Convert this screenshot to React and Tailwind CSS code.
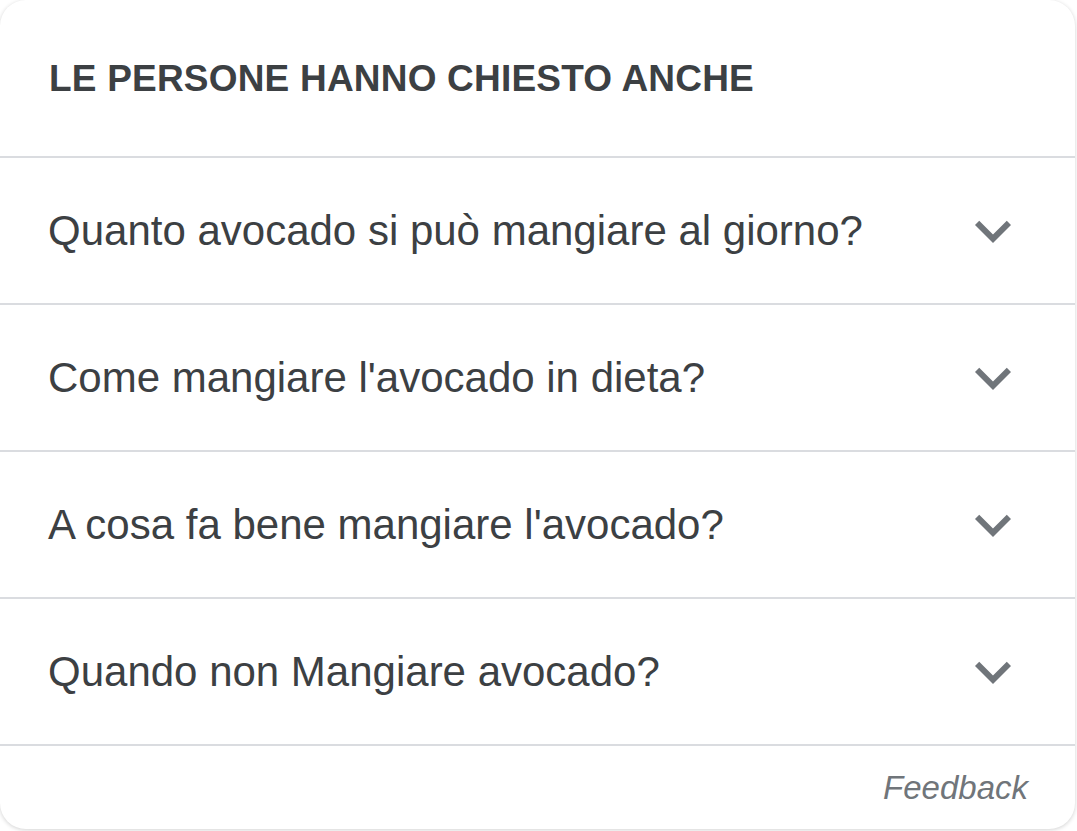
export default function App() {
  const questions = [
    "Quanto avocado si può mangiare al giorno?",
    "Come mangiare l'avocado in dieta?",
    "A cosa fa bene mangiare l'avocado?",
    "Quando non Mangiare avocado?",
  ];

  return (
    <div className="w-[1077px] h-[831px] bg-white font-['Liberation_Sans',Arial,sans-serif]">
      <div className="w-[1075px] h-[829px] bg-white rounded-[26px] shadow-[0_1px_4px_rgba(0,0,0,0.18)] overflow-hidden flex flex-col">
        {/* Header */}
        <div className="h-[156px] flex items-center pl-[49px] pr-[46px] shrink-0">
          <h2 className="text-[37px] font-bold text-[#3c4043] tracking-[0.2px] leading-none">
            LE PERSONE HANNO CHIESTO ANCHE
          </h2>
        </div>

        {/* Questions */}
        {questions.map((q) => (
          <div key={q} className="border-t-2 border-[#dadce0] h-[147px] shrink-0 flex items-center justify-between pl-[48px] pr-[46px]">
            <span className="text-[42px] text-[#3c4043] leading-none">{q}</span>
            <svg width="72" height="72" viewBox="0 0 24 24" fill="#70757a">
              <path d="M16.59 8.59L12 13.17 7.41 8.59 6 10l6 6 6-6z" />
            </svg>
          </div>
        ))}

        {/* Feedback */}
        <div className="border-t-2 border-[#dadce0] flex-1 flex items-center justify-end pr-[47px]">
          <span className="text-[33px] italic text-[#70757a] leading-none">Feedback</span>
        </div>
      </div>
    </div>
  );
}
